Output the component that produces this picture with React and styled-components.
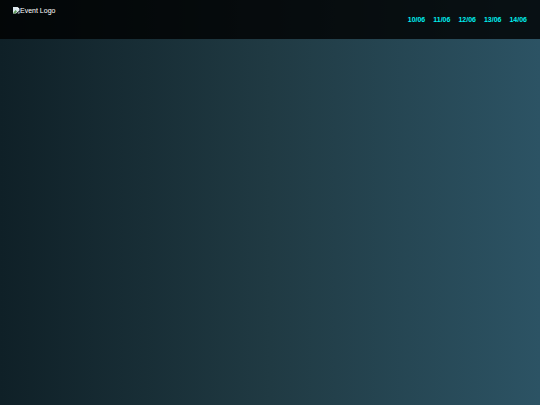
import styled, { createGlobalStyle } from 'styled-components';

const dates = ['10/06', '11/06', '12/06', '13/06', '14/06'];

function App() {
  return (
    <>
      <GlobalStyle />
      <Header>
        <Logo href="#home">
          <BrokenImage />
          Event Logo
        </Logo>
        <Nav>
          {dates.map(date => (
            <DateLink key={date} href={`#${date.replace('/', '-')}`}>
              {date}
            </DateLink>
          ))}
        </Nav>
      </Header>
    </>
  );
}

function BrokenImage() {
  return (
    <Icon viewBox="0 0 14 14" aria-hidden="true">
      <path d="M0 0h9l4 4v3L6 13H0z" fill="#dce8ee" />
      <path d="M1 11l4-5 3 3-4 4H1z" fill="#5f9a58" />
      <path d="M9 0v4h4z" fill="#ffffff" />
      <path d="M13 9v4H9z" fill="#dce8ee" />
    </Icon>
  );
}

export default App;

const GlobalStyle = createGlobalStyle`
  * {
    box-sizing: border-box;
  }

  body {
    margin: 0;
    min-height: 100vh;
    font-family: 'Liberation Sans', Arial, sans-serif;
    background: linear-gradient(to right, #0f2027, #203a43, #2c5364);
  }
`;

const Header = styled.header`
  display: flex;
  justify-content: space-between;
  align-items: center;
  height: 39px;
  padding: 0 13px;
  background: rgba(0, 0, 0, 0.8);
`;

const Logo = styled.a`
  display: flex;
  align-self: flex-start;
  margin-top: 7px;
  font-size: 7px;
  line-height: 8px;
  color: #ffffff;
  text-decoration: none;
`;

const Icon = styled.svg`
  width: 7px;
  height: 7px;
`;

const Nav = styled.nav`
  display: flex;
  gap: 8px;
`;

const DateLink = styled.a`
  font-size: 7px;
  font-weight: bold;
  line-height: 8px;
  color: #00f0f0;
  text-decoration: none;
`;
